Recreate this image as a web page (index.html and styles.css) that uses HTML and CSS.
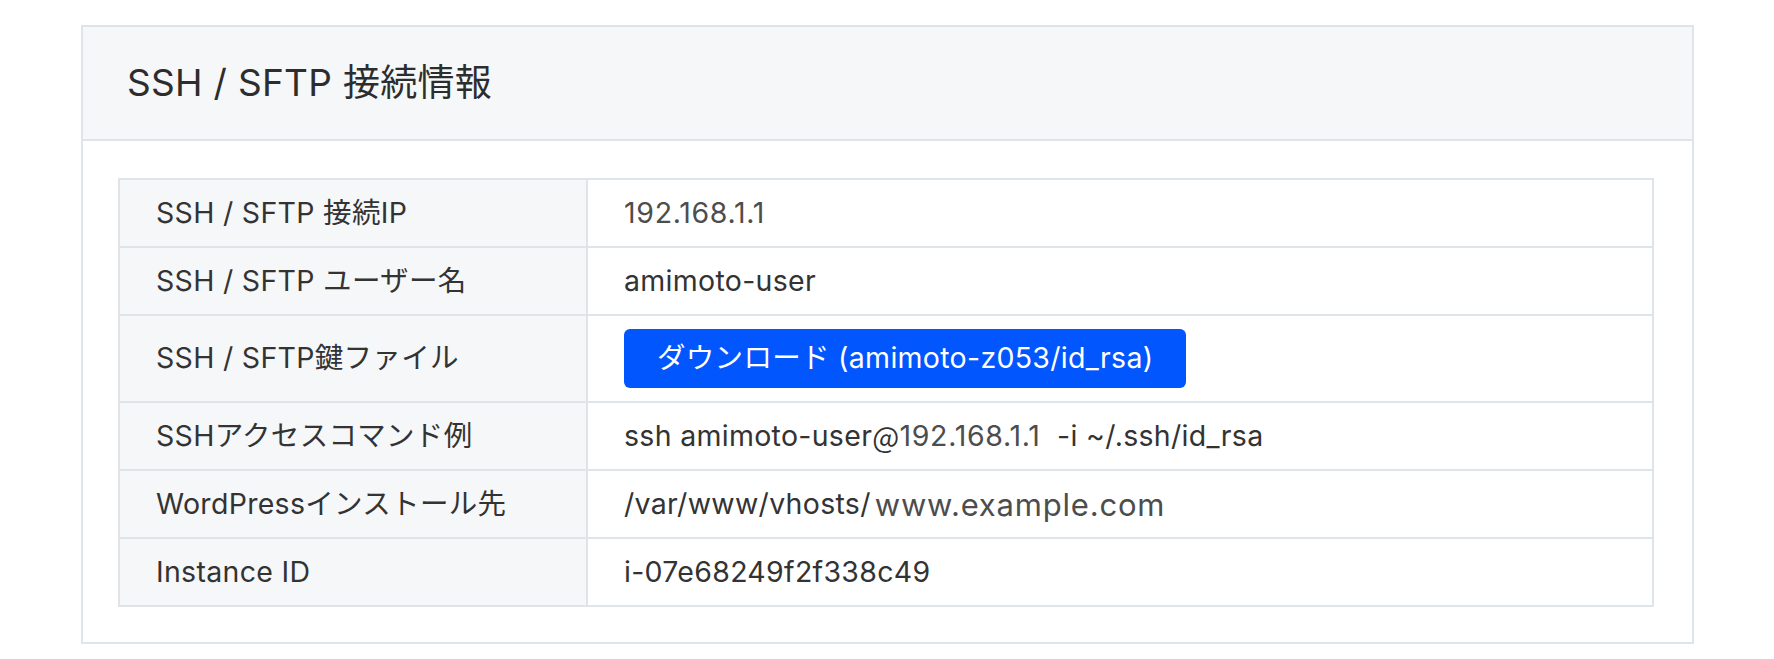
FILE: index.html
```html
<!DOCTYPE html>
<html lang="ja">
<head>
<meta charset="utf-8">
<title>SSH / SFTP 接続情報</title>
<link rel="stylesheet" href="styles.css">
</head>
<body>
<div class="page">
  <section class="card">
    <header class="card-header">
      <h2 class="card-title">SSH / SFTP 接続情報</h2>
    </header>
    <div class="card-body">
      <div class="info-table">
        <div class="info-row">
          <div class="info-label">SSH / SFTP 接続IP</div>
          <div class="info-value"><span class="detected">192.168.1.1</span></div>
        </div>
        <div class="info-row">
          <div class="info-label">SSH / SFTP ユーザー名</div>
          <div class="info-value">amimoto-user</div>
        </div>
        <div class="info-row info-row-tall">
          <div class="info-label">SSH / SFTP鍵ファイル</div>
          <div class="info-value"><button class="btn-download" type="button">ダウンロード (amimoto-z053/id_rsa)</button></div>
        </div>
        <div class="info-row">
          <div class="info-label">SSHアクセスコマンド例</div>
          <div class="info-value keep-space">ssh amimoto-user<span class="at">@</span><span class="detected">192.168.1.1</span>  -i ~/.ssh/id_rsa</div>
        </div>
        <div class="info-row">
          <div class="info-label">WordPressインストール先</div>
          <div class="info-value">/var/www/vhosts/<span class="detected wide">www.example.com</span></div>
        </div>
        <div class="info-row">
          <div class="info-label">Instance ID</div>
          <div class="info-value">i-07e68249f2f338c49</div>
        </div>
      </div>
    </div>
  </section>
</div>
</body>
</html>
```
FILE: styles.css
```css
html, body {
  margin: 0;
  padding: 0;
  background: #ffffff;
}

body {
  font-family: Inter, "Noto Sans CJK JP", sans-serif;
  color: #333333;
}

.page {
  padding: 25px 80px 0 81px;
}

.card {
  border: 2px solid #dfe4e8;
  background: #ffffff;
}

.card-header {
  background: #f6f7f9;
  border-bottom: 2px solid #dfe4e8;
  padding: 34px 44px;
}

.card-title {
  margin: 0;
  font-size: 37px;
  font-weight: 400;
  line-height: 44px;
  letter-spacing: 0.3px;
  color: #2d2d2d;
}

.card-body {
  padding: 37px 38px 35px 35px;
}

.info-table {
  border: 2px solid #dfe4e8;
}

.info-row {
  display: grid;
  grid-template-columns: 468px 1fr;
  border-top: 2px solid #dfe4e8;
}

.info-row:first-child {
  border-top: none;
}

.info-label,
.info-value {
  display: flex;
  align-items: center;
  height: 66px;
  padding: 0 36px;
  font-size: 28.5px;
  line-height: 1;
  letter-spacing: 0.3px;
  white-space: nowrap;
}

.info-label {
  background: #f6f7f9;
  border-right: 2px solid #dfe4e8;
  color: #333333;
}

.info-value {
  color: #333333;
}

.info-row-tall .info-label,
.info-row-tall .info-value {
  height: 85px;
}

.keep-space {
  white-space: pre;
}

.at {
  font-family: "Noto Sans CJK JP", sans-serif;
}

.detected {
  color: #4d4d4d;
  letter-spacing: 0.7px;
}

.wide {
  margin-left: 4px;
  font-size: 31px;
  letter-spacing: 0.8px;
}

.btn-download {
  height: 59px;
  padding: 0 33px;
  border: none;
  border-radius: 6px;
  background: #0156fe;
  color: #ffffff;
  font-family: Inter, "Noto Sans CJK JP", sans-serif;
  font-size: 28.5px;
  line-height: 1;
  letter-spacing: 0.3px;
  cursor: pointer;
}
```
